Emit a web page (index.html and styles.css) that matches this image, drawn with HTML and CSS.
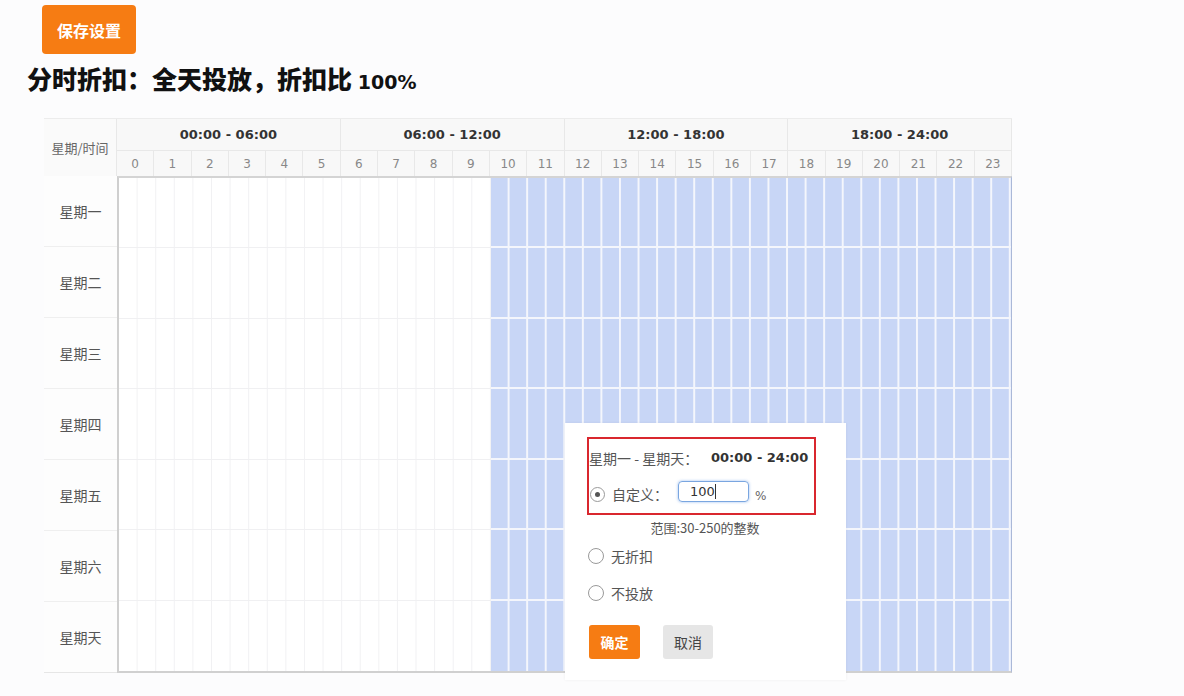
FILE: index.html
```html
<!DOCTYPE html>
<html lang="zh-CN">
<head>
<meta charset="utf-8">
<title>分时折扣</title>
<link rel="stylesheet" href="styles.css">
</head>
<body>
<div class="page">
  <button class="save-btn">保存设置</button>
  <h1 class="title">分时折扣：全天投放，折扣比 <span class="pct">100%</span></h1>

  <div class="scheduler">
    <div class="head">
      <div class="corner">星期/时间</div>
      <div class="group">00:00 - 06:00</div>
      <div class="group">06:00 - 12:00</div>
      <div class="group">12:00 - 18:00</div>
      <div class="group">18:00 - 24:00</div>
      <div class="hour">0</div><div class="hour">1</div><div class="hour">2</div><div class="hour">3</div>
      <div class="hour">4</div><div class="hour">5</div><div class="hour">6</div><div class="hour">7</div>
      <div class="hour">8</div><div class="hour">9</div><div class="hour">10</div><div class="hour">11</div>
      <div class="hour">12</div><div class="hour">13</div><div class="hour">14</div><div class="hour">15</div>
      <div class="hour">16</div><div class="hour">17</div><div class="hour">18</div><div class="hour">19</div>
      <div class="hour">20</div><div class="hour">21</div><div class="hour">22</div><div class="hour">23</div>
    </div>
    <div class="body">
      <div class="days">
        <div class="day">星期一</div>
        <div class="day">星期二</div>
        <div class="day">星期三</div>
        <div class="day">星期四</div>
        <div class="day">星期五</div>
        <div class="day">星期六</div>
        <div class="day">星期天</div>
      </div>
      <div class="cells">
        <div class="row"><div class="seg off"></div><div class="seg on"></div></div>
        <div class="row"><div class="seg off"></div><div class="seg on"></div></div>
        <div class="row"><div class="seg off"></div><div class="seg on"></div></div>
        <div class="row"><div class="seg off"></div><div class="seg on"></div></div>
        <div class="row"><div class="seg off"></div><div class="seg on"></div></div>
        <div class="row"><div class="seg off"></div><div class="seg on"></div></div>
        <div class="row last"><div class="seg off"></div><div class="seg on"></div></div>
      </div>
    </div>
  </div>

  <div class="popup">
    <div class="red-box">
      <div class="r1"><span class="lbl">星期一 - 星期天：</span><span class="time">00:00 - 24:00</span></div>
      <div class="r2">
        <span class="radio checked"></span>
        <span class="opt-lbl">自定义：</span>
        <span class="input">100<i class="caret"></i></span>
        <span class="unit">%</span>
      </div>
    </div>
    <div class="range">范围:30-250的整数</div>
    <div class="opt first"><span class="radio"></span><span>无折扣</span></div>
    <div class="opt second"><span class="radio"></span><span>不投放</span></div>
    <div class="actions">
      <button class="btn ok">确定</button>
      <button class="btn cancel">取消</button>
    </div>
  </div>
</div>
</body>
</html>
```

FILE: styles.css
```css
html, body {
  margin: 0;
  padding: 0;
  background: #fcfcfd;
}
body {
  font-family: "Noto Sans CJK SC", "Noto Sans", sans-serif;
  color: #555;
}
.page {
  position: relative;
  width: 1184px;
  height: 696px;
  overflow: hidden;
}
.save-btn {
  display: block;
  margin: 5px 0 0 42px;
  width: 94px;
  height: 49px;
  background: #f67c13;
  border: none;
  border-radius: 4px;
  color: #fff;
  font-family: "Noto Sans CJK SC", sans-serif;
  font-weight: 700;
  font-size: 16px;
  padding: 0;
}
.title {
  margin: 9px 0 0 27px;
  height: 30px;
  font-size: 25px;
  line-height: 30px;
  font-weight: 900;
  color: #111;
}
.title .pct {
  font-family: "DejaVu Sans", sans-serif;
  font-size: 19px;
  line-height: 1;
  font-weight: 700;
}
.scheduler {
  margin: 25px 0 0 44px;
  width: 968px;
}
.head {
  display: grid;
  grid-template-columns: 73px repeat(24, 1fr);
  grid-template-rows: 32px 25px;
  background: #f8f8f8;
  border-top: 1px solid #ececec;
}
.corner {
  grid-row: span 2;
  display: flex;
  align-items: center;
  justify-content: center;
  font-size: 13px;
  color: #666;
  border-right: 1px solid #e8e8e8;
  background: #fafafa;
}
.group {
  grid-column: span 6;
  display: flex;
  align-items: center;
  justify-content: center;
  font-family: "DejaVu Sans", sans-serif;
  font-weight: 700;
  font-size: 13px;
  color: #333;
  border-right: 1px solid #e8e8e8;
  border-bottom: 1px solid #e8e8e8;
}
.hour {
  display: flex;
  align-items: center;
  justify-content: center;
  font-family: "DejaVu Sans", sans-serif;
  font-size: 12px;
  color: #888;
  border-right: 1px solid #e8e8e8;
}
.body {
  display: grid;
  grid-template-columns: 73px 1fr;
  height: 497px;
}
.days {
  display: flex;
  flex-direction: column;
  background: #fdfdfd;
  border-bottom: 1px solid #e6e6e6;
}
.day {
  flex: 1;
  display: flex;
  align-items: center;
  justify-content: center;
  font-size: 14px;
  color: #555;
  border-bottom: 1px solid #efefef;
}
.day:last-child {
  border-bottom: none;
}
.cells {
  display: flex;
  flex-direction: column;
  border-top: 2px solid #d4d4d4;
  border-left: 2px solid #cfcfcf;
  border-bottom: 2px solid #d0d0d0;
  border-right: 1px solid #aab8d8;
  background: #fff;
}
.row {
  flex: 1;
  display: flex;
}
.seg {
  height: 100%;
}
.off {
  flex: 10;
  background-color: #fff;
  background-image: linear-gradient(to right, transparent calc(100% - 1px), #f1f1f3 calc(100% - 1px));
  background-size: calc(100% / 20) 100%;
  box-shadow: inset 0 -1px 0 #f0f0f2;
}
.on {
  flex: 14;
  background-color: #c8d6f6;
  background-image: linear-gradient(to right, transparent calc(100% - 2px), #f4f6fc calc(100% - 2px));
  background-size: calc(100% / 28) 100%;
  box-shadow: inset 0 -2px 0 #f4f6fc;
}
.row.last .off, .row.last .on {
  box-shadow: none;
}

/* popup */
.popup {
  position: absolute;
  left: 565px;
  top: 423px;
  width: 281px;
  height: 257px;
  box-sizing: border-box;
  padding: 14px 0 0 22px;
  background: #fff;
  box-shadow: 0 0 3px rgba(0, 0, 0, 0.06);
  font-size: 14px;
  color: #555;
}
.red-box {
  width: 229px;
  height: 78px;
  box-sizing: border-box;
  border: 2px solid #d9272e;
  padding-top: 10px;
}
.r1 {
  display: flex;
  height: 18px;
  line-height: 18px;
}
.r1 .lbl {
  width: 122px;
}
.r1 .time {
  font-family: "DejaVu Sans", sans-serif;
  font-weight: 700;
  font-size: 13px;
  color: #333;
}
.r2 {
  display: flex;
  align-items: center;
  margin-top: 14px;
  height: 21px;
}
.radio {
  width: 13px;
  height: 13px;
  border: 1px solid #9a9a9a;
  border-radius: 50%;
  background: #fff;
  margin-left: 1px;
  margin-right: 7px;
  display: flex;
  align-items: center;
  justify-content: center;
  flex: none;
}
.radio.checked::after {
  content: "";
  width: 5px;
  height: 5px;
  border-radius: 50%;
  background: #555;
}
.r2 .radio {
  margin-top: 6px;
}
.r2 .opt-lbl {
  width: 66px;
  margin-top: 4px;
}
.input {
  width: 71px;
  height: 21px;
  box-sizing: border-box;
  border: 1px solid #7aa6e0;
  border-radius: 4px;
  box-shadow: 0 0 3px rgba(90, 150, 230, 0.6);
  padding-left: 11px;
  font-family: "DejaVu Sans", sans-serif;
  font-size: 13px;
  line-height: 19px;
  color: #333;
  display: flex;
  align-items: center;
}
.caret {
  display: inline-block;
  width: 1px;
  height: 15px;
  background: #333;
}
.unit {
  margin-left: 6px;
  margin-top: 8px;
  font-family: "DejaVu Sans", sans-serif;
  font-size: 12px;
  color: #666;
}
.range {
  margin-top: 4px;
  width: 236px;
  text-align: center;
  line-height: 18px;
  font-size: 13px;
  color: #555;
}
.opt {
  display: flex;
  align-items: center;
  height: 18px;
}
.opt .radio {
  width: 14px;
  height: 14px;
}
.opt.first {
  margin-top: 10px;
}
.opt.second {
  margin-top: 19px;
}
.actions {
  display: flex;
  margin-top: 23px;
  margin-left: 2px;
}
.btn {
  height: 34px;
  border: none;
  border-radius: 3px;
  padding: 0;
  font-family: "Noto Sans CJK SC", sans-serif;
  font-size: 14px;
}
.btn.ok {
  width: 51px;
  background: #f67c13;
  color: #fff;
  font-weight: 700;
}
.btn.cancel {
  width: 50px;
  margin-left: 23px;
  background: #e6e6e6;
  color: #444;
}
```
